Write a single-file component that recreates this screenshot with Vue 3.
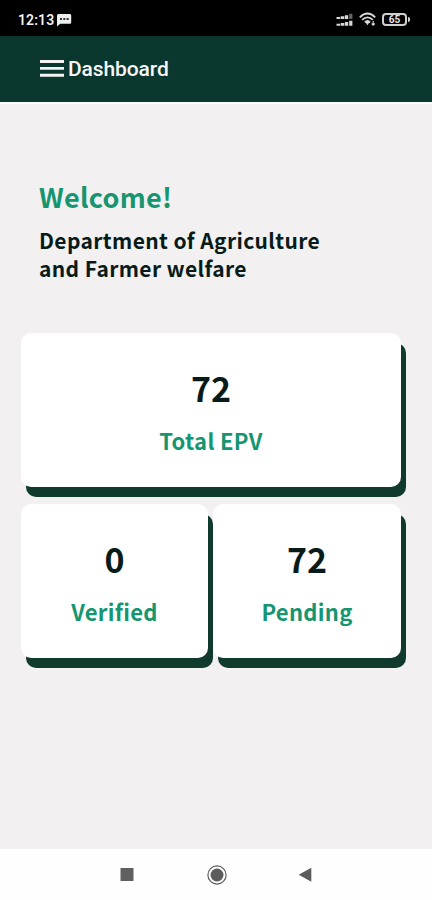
<script setup>
const totals = { value: '72', label: 'Total EPV' }
const parts = [
  { value: '0', label: 'Verified' },
  { value: '72', label: 'Pending' },
]
</script>

<template>
  <div class="screen">
    <div class="status">
      <div class="status-left">
        <span class="clock">12:13</span>
        <svg class="chat" width="15" height="13" viewBox="0 0 15 13">
          <path d="M0 1.5Q0 0 1.5 0H13Q14.2 0 14.2 1.5V8.2Q14.2 9.7 13 9.7H3.2L0 12.4Z" fill="#eee" />
          <path d="M3 4h2v2H3zM6.3 4h2v2h-2zM9.6 4h2v2h-2z" fill="#333" />
        </svg>
      </div>
      <div class="status-right">
        <svg width="18" height="14" viewBox="0 0 18 14" fill="#d8d8d8">
          <path d="M.5 3.9h3.6v2H.5zM4.7 3.2h3.6v2.7H4.7zM8.9 2.2h3.3v3.7H8.9z" />
          <path d="M13.2 .8h3.2v5.1h-3.2z" fill="#666" />
          <path d="M.5 10.7h3.6v2H.5zM4.7 9.9h3.6v2.8H4.7zM8.9 9h3.3v3.7H8.9zM13.2 7.7h3.2v5h-3.2z" />
        </svg>
        <svg width="18" height="15" viewBox="0 0 18 15" fill="none" stroke="#d8d8d8" stroke-width="1.8">
          <path d="M.8 5.3Q8.5-2.3 16.2 5.3M3.2 7.9Q8.5 2.8 13.8 7.9M5.8 10.3Q8.5 7.8 11.2 10.3" />
          <path d="M6.3 10h4.4L8.5 13.2z" fill="#d8d8d8" stroke="none" />
          <path d="M14.2 9v4M12.6 11.5l1.6 1.7 1.6-1.7" stroke-width="1.1" />
        </svg>
        <div class="battery"><span class="level">65</span></div>
      </div>
    </div>

    <header class="appbar">
      <svg width="24" height="17" viewBox="0 0 24 17" fill="#f4f4f4">
        <path d="M0 0h24v2.9H0zM0 6.9h24v2.9H0zM0 13.8h24v2.9H0z" />
      </svg>
      <span class="title">Dashboard</span>
    </header>

    <main class="content">
      <h1 class="welcome">Welcome!</h1>
      <p class="dept">Department of Agriculture<br>and Farmer welfare</p>
      <div class="cards">
        <section class="card wide">
          <div class="value">{{ totals.value }}</div>
          <div class="label">{{ totals.label }}</div>
        </section>
        <section v-for="p in parts" :key="p.label" class="card">
          <div class="value">{{ p.value }}</div>
          <div class="label">{{ p.label }}</div>
        </section>
      </div>
    </main>

    <nav class="navbar">
      <svg width="20" height="20" viewBox="0 0 20 20"><path d="M3.5 3h13v13h-13z" fill="#606060" /></svg>
      <svg width="20" height="20" viewBox="0 0 20 20">
        <circle cx="10" cy="10" r="9.1" fill="none" stroke="#5c5c5c" stroke-width="1.2" />
        <circle cx="10" cy="10" r="6.5" fill="#5c5c5c" />
      </svg>
      <svg width="20" height="20" viewBox="0 0 20 20"><path d="M1.7 9.7L14.3 2.7v14z" fill="#5c5c5c" /></svg>
    </nav>
  </div>
</template>

<style>
body {
  margin: 0;
}
</style>

<style scoped>
.screen {
  width: 432px;
  height: 900px;
  display: flex;
  flex-direction: column;
  overflow: hidden;
  background: #f2f0f1;
  font-family: "Noto Sans CJK SC", "Noto Sans", sans-serif;
}
.status {
  height: 36px;
  flex: none;
  box-sizing: border-box;
  padding: 3px 25px 0 18px;
  display: flex;
  align-items: center;
  justify-content: space-between;
  background: #000;
}
.status-left,
.status-right {
  display: flex;
  align-items: center;
}
.status-left {
  gap: 3px;
}
.clock {
  font: 600 14px/18px Roboto, sans-serif;
  color: #f2f2f2;
  letter-spacing: 0.1px;
}
.chat {
  margin-top: 2px;
}
.status-right {
  gap: 5px;
}
.battery {
  position: relative;
  width: 25px;
  height: 13px;
  box-sizing: border-box;
  border: 2px solid #d0d0d0;
  border-radius: 4px;
  display: flex;
  justify-content: center;
  align-items: center;
}
.battery::after {
  content: "";
  position: absolute;
  right: -5px;
  top: 2px;
  width: 2px;
  height: 5px;
  border-radius: 0 2px 2px 0;
  background: #d8d8d8;
}
.level {
  font: 700 10px/10px Roboto, sans-serif;
  color: #e4e4e4;
}
.appbar {
  height: 66px;
  flex: none;
  box-sizing: border-box;
  padding: 0 0 1px 40px;
  display: flex;
  align-items: center;
  gap: 4px;
  background: #0a382e;
  box-shadow: 0 2px 0 #fbfafb;
}
.title {
  font: 500 21px/26px Roboto, sans-serif;
  color: #f7f7f7;
  letter-spacing: -0.1px;
}
.content {
  flex: 1;
  min-height: 0;
  padding: 75px 31px 0 21px;
}
.welcome {
  margin: 0 0 0 18px;
  font-size: 27px;
  line-height: 40px;
  font-weight: 700;
  letter-spacing: 0.3px;
  color: #159570;
  white-space: nowrap;
}
.dept {
  margin: 9px 0 0 18px;
  font-size: 21px;
  line-height: 28px;
  font-weight: 700;
  letter-spacing: 0.37px;
  color: #081b18;
  white-space: nowrap;
}
.cards {
  margin-top: 51px;
  display: grid;
  grid-template-columns: 187px 188px;
  column-gap: 5px;
  row-gap: 17px;
}
.card {
  height: 154px;
  box-sizing: border-box;
  padding-top: 30px;
  border-radius: 10px;
  text-align: center;
  background: #fff;
  box-shadow: 5px 10px 0 #103a2e;
}
.wide {
  grid-column: 1 / 3;
}
.value {
  font-size: 34px;
  line-height: 50px;
  font-weight: 700;
  color: #081b18;
}
.label {
  margin-top: 11px;
  font-size: 22px;
  line-height: 32px;
  font-weight: 700;
  letter-spacing: 0.3px;
  color: #159570;
}
.navbar {
  height: 51px;
  flex: none;
  display: flex;
  justify-content: center;
  gap: 70px;
  padding-left: 2px;
  align-items: center;
  background: #fefefe;
}
</style>
